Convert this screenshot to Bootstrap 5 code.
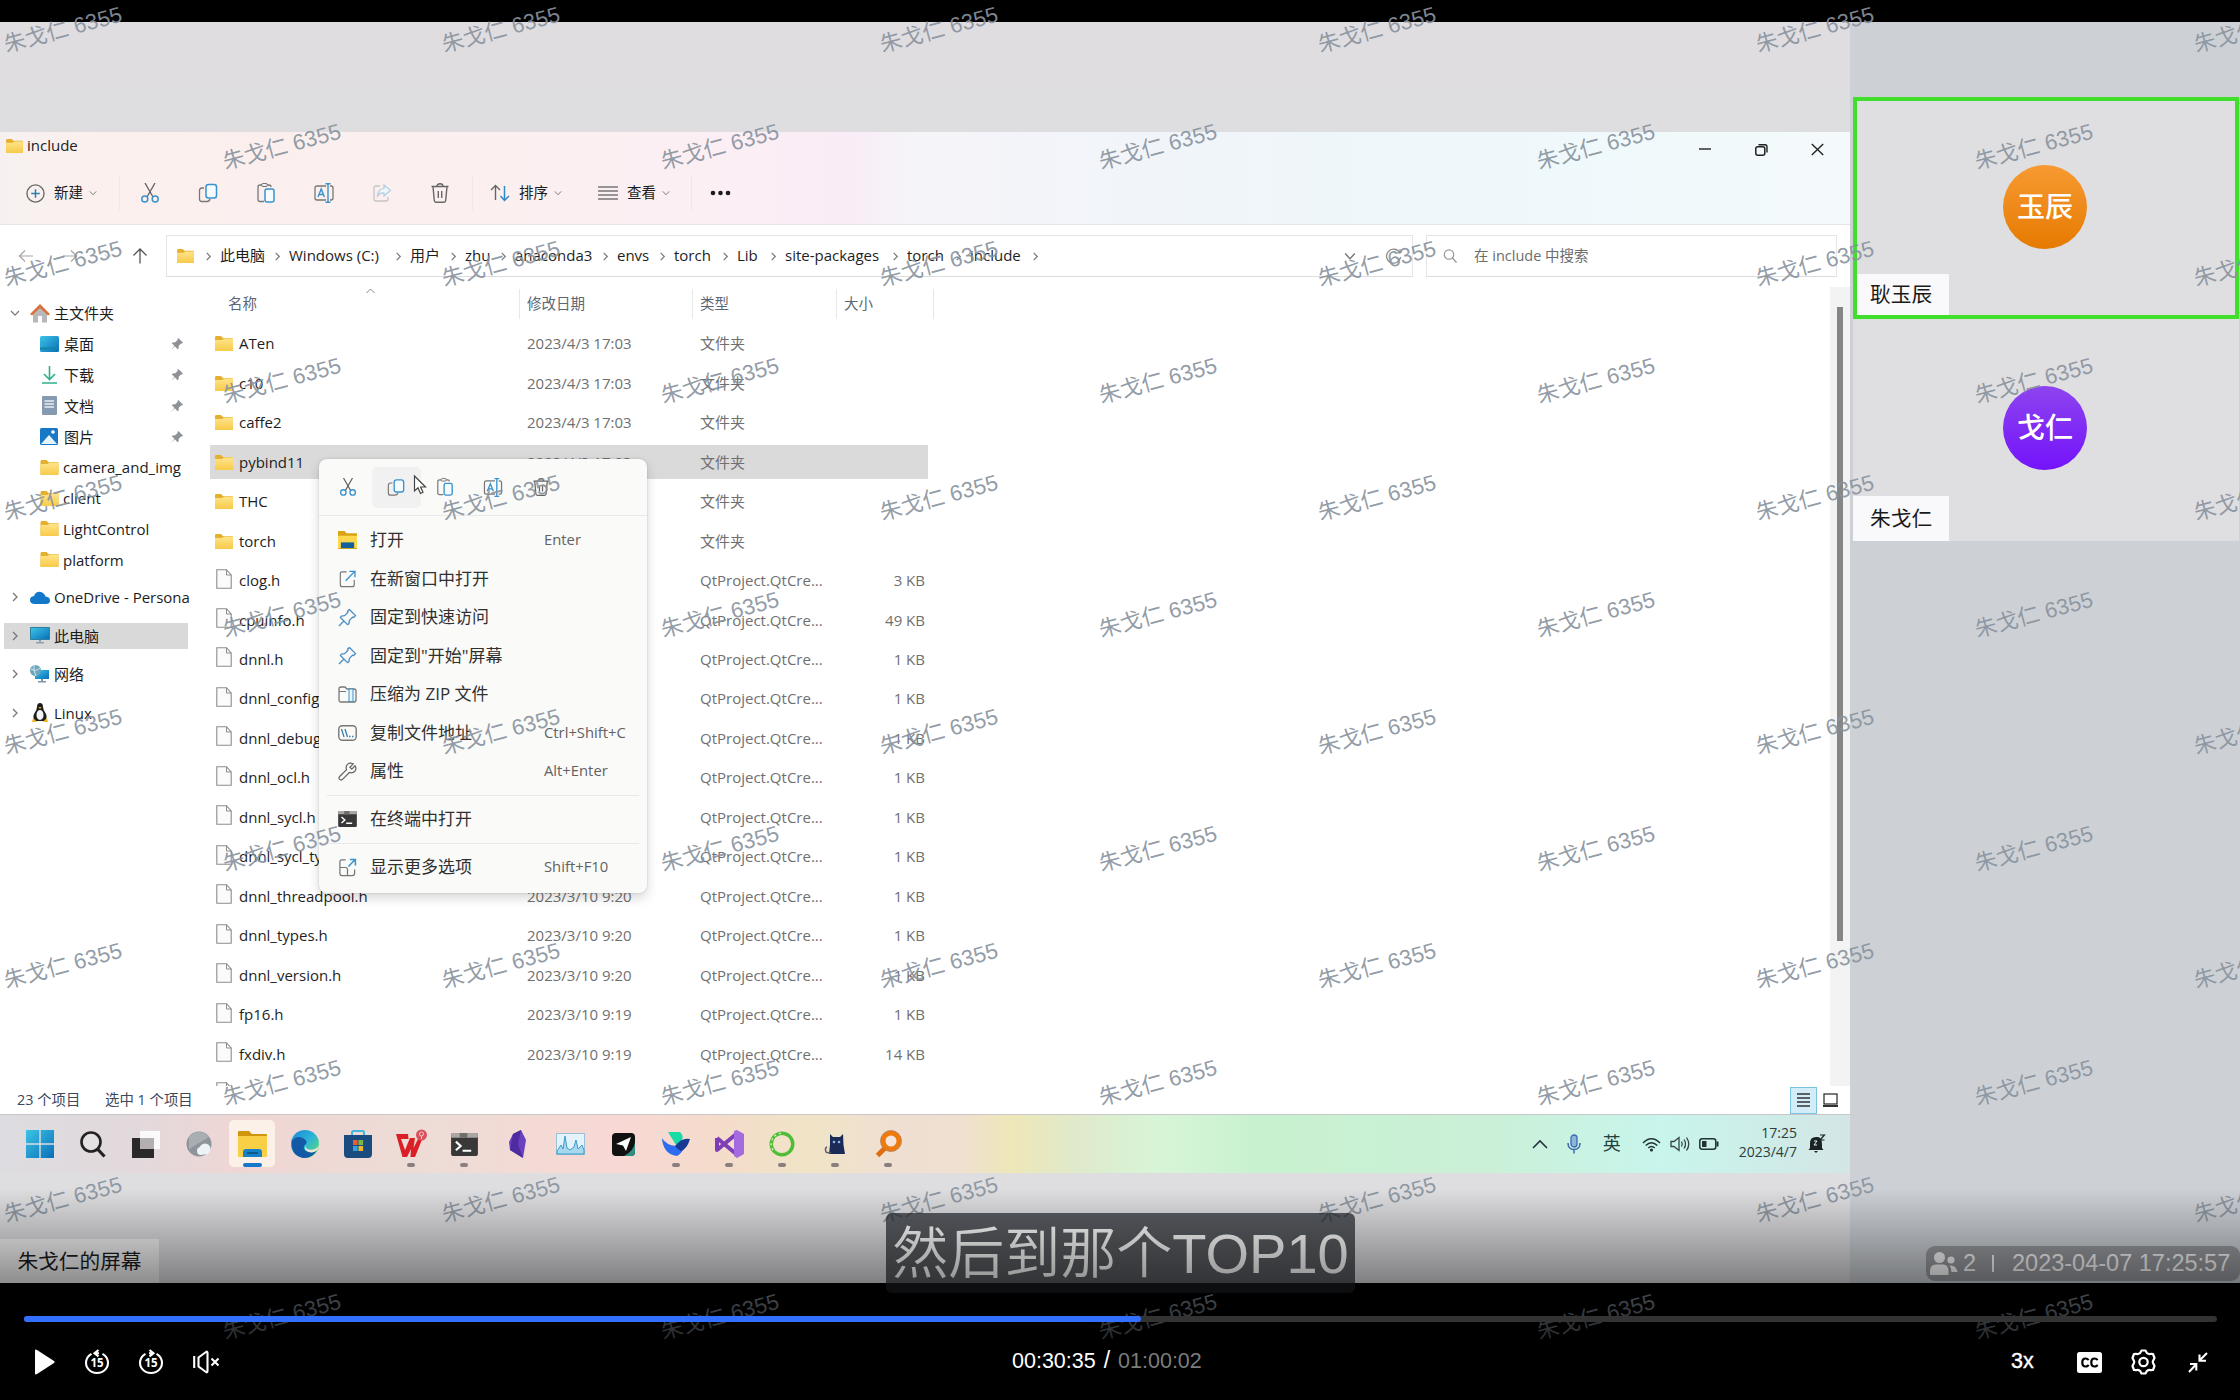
<!DOCTYPE html>
<html lang="zh-CN">
<head>
<meta charset="utf-8">
<meta name="viewport" content="width=device-width, initial-scale=1">
<title>会议录制</title>
<link rel="stylesheet" href="https://cdn.jsdelivr.net/npm/bootstrap@5.3.0/dist/css/bootstrap.min.css">
<style>
body{margin:0;background:#000;font-family:"Open Sans","Noto Sans CJK SC",sans-serif;font-size:15px;line-height:1.2;color:#222}
svg{display:block;flex:none;overflow:visible}
.player{width:2240px;height:1400px;overflow:hidden;background:#000;padding-top:22px}
.video{height:1261px}
.shared{width:1850px;background:linear-gradient(#e0dde1 0,#e0dde1 65px,#dedee1 66px);padding-top:110px}
.explorer{height:982px;background:#fff;overflow:hidden}
.topbar{height:93px;border-bottom:1px solid #e9e2e8;background:linear-gradient(90deg,#f6f1f0 0,#fbf0ee 90px,#fbefef 450px,#fceff4 700px,#faecf6 850px,#f5f4f9 910px,#f0f5fa 1200px,#eef8fb 1500px,#f4fafb 1850px)}
.titlerow{height:36px;padding-left:6px}
.cap{width:56.5px}
.tools{height:50px;font-size:14.5px;color:#1c1c1c}
.tool{width:58px;padding-left:2px}
.vline{width:1px;height:34px;background:#f0e5e8}
.addr{height:62px;padding-top:10px;color:#1e1e1e}
.abox{height:42px;border:1px solid #e6e6e8;border-bottom-color:#dcdcdc}
.chev{width:26px}
.crumbs span,.nw{white-space:nowrap}
.crumbs span{padding-bottom:2px;margin-left:-1px;margin-right:1px}
.side{width:196px;height:799px;padding-top:11px}
.nav-i{height:30.8px;padding-left:40px;color:#1c1c1c}
.nav-i>svg{margin-right:4px}
.nav-i.top{padding-left:9px}
.nav-g{height:38.5px}
.nav-i .pin{margin-left:auto;margin-right:12px}
.sel{background:#d9d9d9;width:184px;height:26px;margin:6.25px 0 6.25px 4px;padding-left:5px!important}
.files{width:1634px;height:799px;overflow:hidden}
.fhead{height:37px;color:#5c6774;font-size:14.5px}
.fhead>div{height:30px;margin-top:2px;border-right:1px solid #e8e8e8;display:flex;align-items:center}
.frow{height:39.48px;color:#707070}
.frow>div{height:33.6px;width:718px;margin-left:14px;padding-left:5px;display:flex;align-items:center}
.frow span{padding-bottom:1px}
.frow.on>div{background:#dadada}
.fn{width:288px;color:#1e1e1e;margin-left:6px}
.ft{width:173px}.fy{width:130px}.fz{width:95px;text-align:right}
.track{width:20px;background:#f3f3f3;padding:20px 0 0 7px}
.thumb{width:6px;height:634px;background:#868686}
.status{height:28px;color:#3d4858;font-size:15px;padding-left:17px}
.vbtn{width:27px;height:27px;background:#d3edf8;border:1px solid #7cc3de}
.ctx{left:319px;top:327px;width:328px;height:434px;background:#fafaf9;border-radius:8px;box-shadow:0 5px 12px rgba(0,0,0,.16),0 0 2px rgba(0,0,0,.18);font-size:17px;color:#303030}
.ctop{height:57px;border-bottom:1px solid #e9e9e9;padding-left:5px}
.ctop>div{width:48.3px;height:41px}
.ctop>.hov{background:#f1f1f1;border-radius:5px}
.cit{height:38.5px;padding-left:19px}
.cit>span:nth-of-type(1){width:174px;margin-left:13px}
.cit .key{font-size:14.8px;color:#626262}
.csep{height:1px;background:#e9e9e9;margin:4px 8px 4.5px}
.cur{left:413px;top:343px}
.taskbar{height:59px;border-top:1px solid #c8c6c8;padding-left:13.5px;background:linear-gradient(90deg,#dddce0 0,#e2d9dc 130px,#efd6d4 240px,#eddcd6 420px,#f8d8d4 620px,#f4dccb 720px,#f0e4c6 810px,#efdfd2 900px,#efe0d0 960px,#eee7b8 1010px,#dfeacb 1080px,#d7f5d7 1160px,#c8f1cf 1260px,#caf0d8 1500px,#c8f5ec 1660px,#d3e6e5 1850px)}
.tb{width:53px;height:58px;position:relative;display:flex;align-items:center;justify-content:center}
.tb.act::before{content:"";position:absolute;left:3px;top:5px;width:46px;height:47px;border-radius:5px;background:rgba(255,250,240,.75)}
.tb svg{position:relative}
.tb.run::after,.tb.act::after{content:"";position:absolute;left:22px;top:48px;width:8px;height:4px;border-radius:2px;background:#8a7f80}
.tb.act::after{left:17px;width:19px;background:#1677cc}
.tray{margin-right:25px;color:#24403c;font-size:14px}
.label-s{width:159px;height:44px;background:#f6f6f8;font-size:20.7px;color:#1c1c1c;margin-top:66px}
.people{width:390px;background:#cdd1d6;padding:75px 1px 0 3px}
.tile{background:#dfdee1;height:222px;position:relative}
.tile.talk{border:4px solid #3fdf2c}
.ava{width:84px;height:84px;border-radius:50%;color:#fff;font-size:28px;font-weight:500;margin-right:2px}
.ava.o{background:linear-gradient(#f79a33,#e67a00)}
.ava.p{background:linear-gradient(#8d44ee,#7413fb)}
.tag{background:#f9f9fb;color:#1a1a1a;font-size:20.7px}
.wm{position:absolute;font:22px "Liberation Sans","Noto Sans CJK SC",sans-serif;line-height:1;color:rgba(137,147,158,.92);white-space:nowrap;transform:translate(-50%,-50%) rotate(-15deg)}
.marks{left:0;top:0;width:2240px;height:1400px;overflow:hidden}
.subt{left:886px;top:1213px;width:469px;height:80px;border-radius:6px;background:rgba(31,35,41,.7);color:#fff;font:56px "Liberation Sans","Noto Sans CJK SC",sans-serif;line-height:71px;white-space:nowrap;text-align:center}
.subt span{font-family:"Noto Sans CJK SC",sans-serif;font-weight:350}
.info{right:0;top:1246px;width:314px;height:35px;border-radius:9px;background:rgba(60,62,65,.36);color:#fff;font:23.5px "Liberation Sans",sans-serif;line-height:35px;padding-left:4px}
.shade{left:0;top:1188px;width:2240px;height:212px;background:linear-gradient(rgba(0,0,0,0),rgba(0,0,0,.95))}
.controls{left:0;top:1316px;width:2240px;padding:0 23px 0 24px;color:#fff;font-family:"Liberation Sans",sans-serif;font-size:21.5px}
.bar{height:6px;border-radius:3px;background:#333}
.bar>div{height:6px;border-radius:3px;background:#3370ff}
.btns{height:80px}
</style>
<script src="https://cdn.jsdelivr.net/npm/bootstrap@5.3.0/dist/js/bootstrap.bundle.min.js"></script>
</head>
<body>
<svg width="0" height="0" class="position-absolute">
<defs>
<linearGradient id="gy" x2="0" y2="1"><stop offset="0" stop-color="#ffe48a"/><stop offset="1" stop-color="#f7ca49"/></linearGradient>
<linearGradient id="gb" x2="1" y2="1"><stop offset="0" stop-color="#3cc4e6"/><stop offset="1" stop-color="#0a6fb8"/></linearGradient>
<linearGradient id="ge" x2="1" y2="1"><stop offset="0" stop-color="#1a86d6"/><stop offset=".5" stop-color="#2bb5d8"/><stop offset="1" stop-color="#6be05a"/></linearGradient>
<symbol id="folder" viewBox="0 0 18 15"><path d="M0 1.5Q0 0 1 0H6L8 2H17Q18 2 18 3V14Q18 15 17 15H1Q0 15 0 14Z" fill="#e5b030"/><path d="M0 4H7L9 2.6H18V14Q18 15 17 15H1Q0 15 0 14Z" fill="url(#gy)"/></symbol>
<symbol id="file" viewBox="0 0 16 20"><path d="M.8.7H10.5L15.2 6V19.3H.8Z" fill="#fbfbfb" stroke="#8d8d8d" stroke-width="1.1"/><path d="M10.5.7V6H15.2" fill="none" stroke="#8d8d8d"/></symbol>
<symbol id="r" viewBox="0 0 10 10"><path d="M3 1L7 5L3 9" fill="none" stroke="#777" stroke-width="1.3"/></symbol>
<symbol id="d" viewBox="0 0 10 10"><path d="M1 3L5 7.2L9 3" fill="none" stroke="#777" stroke-width="1.2"/></symbol>
<symbol id="cut" viewBox="0 0 20 20"><path d="M5 0L13 14M15 0L7 14" stroke="#606060" stroke-width="1.3" fill="none"/><circle cx="4.8" cy="16" r="3" fill="none" stroke="#3a92cc" stroke-width="1.5"/><circle cx="15.2" cy="16" r="3" fill="none" stroke="#3a92cc" stroke-width="1.5"/></symbol>
<symbol id="copy" viewBox="0 0 20 20"><path d="M6 5H4Q1.5 5 1.5 7.500V16Q1.500 18.500 4 18.500H9Q11.500 18.500 12 16" fill="none" stroke="#777" stroke-width="1.3"/><rect x="8" y="1.500" width="10.500" height="13.500" rx="2.500" fill="#f5fbff" stroke="#3a92cc" stroke-width="1.500"/></symbol>
<symbol id="paste" viewBox="0 0 20 20"><path d="M8 18.500H4Q2 18.500 2 16.500V4Q2 2 4 2H13Q15 2 15 4" fill="none" stroke="#777" stroke-width="1.300"/><rect x="5.500" y=".5" width="6" height="3" rx="1.500" fill="#eee" stroke="#777"/><rect x="9" y="6" width="9" height="13" rx="2" fill="#f5fbff" stroke="#3a92cc" stroke-width="1.500"/></symbol>
<symbol id="ren" viewBox="0 0 20 20"><path d="M12 3H3Q1 3 1 5V15Q1 17 3 17H12M16 3H17Q19 3 19 5V15Q19 17 17 17H16" fill="none" stroke="#777" stroke-width="1.300"/><path d="M11.500.7H16.500M14 .7V19.300M11.500 19.300H16.500M4 14L7.200 6L10.400 14M5 11.500H9.400" fill="none" stroke="#3a92cc" stroke-width="1.400"/></symbol>
<symbol id="share" viewBox="0 0 20 20"><path d="M8 3H4Q2 3 2 5V16Q2 18 4 18H14Q16 18 16 16V14" fill="none" stroke="#c5c5c8" stroke-width="1.300"/><path d="M12 2L18.500 7.500L12 13V10Q8 9.500 5.500 13Q6 6 12 5.500Z" fill="#eef6fc" stroke="#b3cde0" stroke-width="1.200"/></symbol>
<symbol id="trash" viewBox="0 0 20 20"><path d="M1.500 3.500H18.500M7 3.500Q7 .8 10 .8Q13 .8 13 3.500M3 3.500L4.300 17.500Q4.500 19.200 6 19.200H14Q15.500 19.200 15.700 17.500L17 3.500M8.300 8V15M11.700 8V15" fill="none" stroke="#666" stroke-width="1.400"/></symbol>
<symbol id="pin" viewBox="0 0 16 16"><path d="M9.500 1L15 6.500L13.600 7.500L12.600 7.300L10 10L9.800 13L8.800 14L5.500 10.500L1 15L5 10L2 7.200L3 6.200L6 6L8.700 3.400L8.500 2.200Z" fill="#8e9196"/></symbol>
<symbol id="pino" viewBox="0 0 20 20"><path d="M12 1.500L18.500 8L16.500 10L15.500 9.500L12 13L11.500 16.500L10 17.500L2.500 10L3.500 8.500L7 8L10.500 4.500L10 3.500ZM6 14L1 19" fill="none" stroke="#4b8fc4" stroke-width="1.400" stroke-linejoin="round"/></symbol>
<symbol id="open" viewBox="0 0 20 20"><path d="M9 2H4Q2 2 2 4V16Q2 18.500 4 18.500H15Q17.500 18.500 17.500 16V11" fill="none" stroke="#777" stroke-width="1.300"/><path d="M8 12L18 1.500M12 1.500H18.300V8" fill="none" stroke="#3a92cc" stroke-width="1.500"/></symbol>
<symbol id="pc" viewBox="0 0 20 17"><rect x="0" y="0" width="20" height="13" rx="1" fill="#2d7fa0"/><rect x="1" y="1" width="18" height="11" fill="url(#gb)"/><path d="M9 13H11V15H14V16.500H6V15H9Z" fill="#8fa1ad"/></symbol>
<symbol id="term" viewBox="0 0 28 24"><rect width="28" height="24" rx="2" fill="#383838"/><rect width="28" height="5" rx="1" fill="#a9a6a3"/><rect x="9" width="8" height="5" fill="#706d6b"/><path d="M5 9L10 13.500L5 18M12 18.500H21" stroke="#fff" stroke-width="2.200" fill="none"/></symbol>
</defs>
</svg>

<div class="player position-relative">
 <div class="video d-flex">
  <main class="shared d-flex flex-column">
   <section class="explorer position-relative">
    <div class="topbar">
     <div class="titlerow d-flex align-items-center">
      <svg width="17" height="14" class="mb-2"><use href="#folder"/></svg><span class="ms-1" style="padding-bottom:10px">include</span>
      <div class="ms-auto d-flex">
       <div class="cap d-flex justify-content-center"><svg width="12" height="14" viewBox="0 0 12 14"><path d="M0 6H12" stroke="#222" stroke-width="1.400"/></svg></div>
       <div class="cap d-flex justify-content-center"><svg width="13" height="14" viewBox="0 0 13 14"><rect x=".8" y="3.800" width="9" height="8.500" rx="2" fill="none" stroke="#222" stroke-width="1.500"/><path d="M3.500 1.800H10Q12 1.800 12 4V9.500" fill="none" stroke="#222" stroke-width="1.400"/></svg></div>
       <div class="cap d-flex justify-content-center"><svg width="13" height="14" viewBox="0 0 13 14"><path d="M.8 1L12.200 12M12.200 1L.8 12" stroke="#222" stroke-width="1.400"/></svg></div>
       <div style="width:4px"></div>
      </div>
     </div>
     <div class="tools d-flex align-items-center">
      <div class="d-flex align-items-center" style="width:119px;padding-left:26px"><svg width="19" height="19" viewBox="0 0 20 20"><circle cx="10" cy="10" r="9" fill="none" stroke="#666" stroke-width="1.400"/><path d="M5.500 10H14.500M10 5.500V14.500" stroke="#2f7fae" stroke-width="1.600"/></svg><span style="margin:0 6px 0 9px">新建</span><svg width="8" height="8"><use href="#d"/></svg></div>
      <div class="vline"></div>
      <div class="tool d-flex justify-content-center"><svg width="20" height="20"><use href="#cut"/></svg></div>
      <div class="tool d-flex justify-content-center"><svg width="20" height="20"><use href="#copy"/></svg></div>
      <div class="tool d-flex justify-content-center"><svg width="20" height="20"><use href="#paste"/></svg></div>
      <div class="tool d-flex justify-content-center"><svg width="20" height="20"><use href="#ren"/></svg></div>
      <div class="tool d-flex justify-content-center"><svg width="20" height="20"><use href="#share"/></svg></div>
      <div class="tool d-flex justify-content-center"><svg width="20" height="20"><use href="#trash"/></svg></div>
      <div class="vline" style="margin-left:4px"></div>
      <div class="d-flex align-items-center" style="width:125px;padding-left:17px"><svg width="20" height="18" viewBox="0 0 20 18"><path d="M5.500 16V1.500M1 6L5.500 1.500L10 6" fill="none" stroke="#666" stroke-width="1.400"/><path d="M14.500 2V16.500M10.500 12L14.500 16.500L19 12" fill="none" stroke="#2f8bc4" stroke-width="1.500"/></svg><span style="margin:0 6px 0 9px">排序</span><svg width="8" height="8"><use href="#d"/></svg></div>
      <div class="d-flex align-items-center" style="width:93px"><svg width="20" height="14" viewBox="0 0 20 14"><path d="M0 1H20M0 5H20M0 9H20M0 13H20" stroke="#777" stroke-width="1.300"/></svg><span style="margin:0 6px 0 9px">查看</span><svg width="8" height="8"><use href="#d"/></svg></div>
      <div class="vline"></div>
      <svg class="ms-3" width="24" height="6" viewBox="0 0 24 6"><g fill="#1c1c1c"><circle cx="5" cy="3" r="2.300"/><circle cx="12.500" cy="3" r="2.300"/><circle cx="20" cy="3" r="2.300"/></g></svg>
     </div>
    </div>
    <div class="addr d-flex">
     <div class="d-flex align-items-center" style="width:166px;height:42px;padding-left:18px">
      <svg width="16" height="14" viewBox="0 0 16 14"><path d="M15 7H1.500M7 1.500L1.500 7L7 12.500" fill="none" stroke="#a5a5a5" stroke-width="1.200"/></svg>
      <svg width="16" height="14" viewBox="0 0 16 14" style="margin-left:28px"><path d="M1 7H14.500M9 1.500L14.500 7L9 12.500" fill="none" stroke="#a5a5a5" stroke-width="1.200"/></svg>
      <svg width="8" height="8" style="margin-left:26px"><use href="#d" opacity=".5"/></svg>
      <svg width="16" height="16" viewBox="0 0 16 16" style="margin-left:20px"><path d="M8 15.500V1M1.500 7.500L8 1L14.500 7.500" fill="none" stroke="#555" stroke-width="1.300"/></svg>
     </div>
     <div class="abox d-flex align-items-center" style="width:1247px;padding-left:9px">
      <svg width="19" height="14"><use href="#folder"/></svg>
      <div class="crumbs d-flex align-items-center" id="crumbs"></div>
      <svg class="ms-auto" width="12" height="12"><use href="#d"/></svg>
      <svg width="17" height="17" viewBox="0 0 17 17" style="margin:0 10px 0 29px"><path d="M14.500 4.500A7 7 0 1 0 15.500 9M15 1V5H11" fill="none" stroke="#888" stroke-width="1.200"/></svg>
     </div>
     <div class="abox d-flex align-items-center" style="width:411px;margin-left:13px;padding-left:16px;color:#6d6d6d;font-size:14.500px">
      <svg width="14" height="14" viewBox="0 0 14 14"><circle cx="6" cy="5.500" r="4.700" fill="none" stroke="#999" stroke-width="1.200"/><path d="M9.500 9L13.500 13.500" stroke="#999" stroke-width="1.300"/></svg><span style="margin-left:17px">在 include 中搜索</span>
     </div>
    </div>
    <div class="d-flex">
     <nav class="side" id="side"></nav>
     <div class="files position-relative">
      <div class="fhead d-flex">
       <div style="width:324px;padding-left:32px">名称</div><div style="width:173px;padding-left:7px">修改日期</div><div style="width:144px;padding-left:7px">类型</div><div style="width:97px;padding-left:7px">大小</div>
      </div>
      <svg class="position-absolute" width="9" height="6" viewBox="0 0 9 6" style="left:170px;top:1px"><path d="M.5 5L4.500 1L8.500 5" fill="none" stroke="#888"/></svg>
      <div id="rows"></div>
     </div>
     <div class="track"><div class="thumb"></div></div>
    </div>
    <div class="status d-flex align-items-center">
     <span class="nw" style="width:88px;font-size:14.400px">23 个项目</span><span class="nw" style="font-size:14.400px">选中 1 个项目</span>
     <div class="vbtn d-flex align-items-center justify-content-center ms-auto"><svg width="13" height="14" viewBox="0 0 13 14"><path d="M0 1H13M0 5H13M0 9H13M0 13H13" stroke="#333" stroke-width="1.300"/></svg></div>
     <svg width="15" height="14" viewBox="0 0 15 14" style="margin:0 12px 0 6px"><rect x="1" y="1" width="13" height="10" fill="#fff" stroke="#333" stroke-width="1.300"/><path d="M0 13H15" stroke="#333" stroke-width="2"/></svg>
    </div>
    <div class="ctx position-absolute">
     <div class="ctop d-flex align-items-center">
      <div class="d-flex align-items-center justify-content-center"><svg width="18" height="20"><use href="#cut"/></svg></div>
      <div class="hov d-flex align-items-center justify-content-center"><svg width="18" height="19"><use href="#copy"/></svg></div>
      <div class="d-flex align-items-center justify-content-center"><svg width="18" height="20"><use href="#paste"/></svg></div>
      <div class="d-flex align-items-center justify-content-center"><svg width="20" height="19"><use href="#ren"/></svg></div>
      <div class="d-flex align-items-center justify-content-center"><svg width="18" height="20"><use href="#trash"/></svg></div>
     </div>
     <div style="padding-top:5px">
      <div class="cit d-flex align-items-center"><svg width="19" height="18" viewBox="0 0 20 19"><path d="M0 0H7L9 2.500H20V19H0Z" fill="#d9a414"/><path d="M0 5H20V18H0Z" fill="#ffd84f"/><path d="M3 12H17V18H3Z" fill="#12619c"/></svg><span>打开</span><span class="key">Enter</span></div>
      <div class="cit d-flex align-items-center"><svg width="19" height="18"><use href="#open"/></svg><span>在新窗口中打开</span></div>
      <div class="cit d-flex align-items-center"><svg width="19" height="19"><use href="#pino"/></svg><span>固定到快速访问</span></div>
      <div class="cit d-flex align-items-center"><svg width="19" height="19"><use href="#pino"/></svg><span>固定到"开始"屏幕</span></div>
      <div class="cit d-flex align-items-center"><svg width="19" height="17" viewBox="0 0 19 17"><path d="M1 3Q1 1 3 1H7L9 3H16Q18 3 18 5V14Q18 16 16 16H3Q1 16 1 14Z" fill="none" stroke="#777" stroke-width="1.300"/><rect x="11" y="3" width="4" height="12.500" fill="#eaf6ff" stroke="#3a92cc"/><path d="M1 5.500H8" stroke="#777"/></svg><span>压缩为 ZIP 文件</span></div>
      <div class="cit d-flex align-items-center"><svg width="19" height="16" viewBox="0 0 19 16"><rect x=".8" y=".8" width="17.400" height="14.400" rx="3.500" fill="none" stroke="#777" stroke-width="1.400"/><path d="M3.500 4L6 12M7 4L9.500 12M11 11.500H12.500M14 11.500H15.500" stroke="#3a7fae" stroke-width="1.300"/></svg><span>复制文件地址</span><span class="key">Ctrl+Shift+C</span></div>
      <div class="cit d-flex align-items-center"><svg width="19" height="19" viewBox="0 0 20 20"><path d="M18 4L14.500 7.500L12.500 5.500L16 2Q12 0 9.500 3Q8 5 9 8L1.500 15.500Q.5 17 1.800 18.300Q3 19.500 4.500 18.500L12 11Q15.500 12 17.500 10Q20 7.500 18 4Z" fill="none" stroke="#666" stroke-width="1.300"/></svg><span>属性</span><span class="key">Alt+Enter</span></div>
      <div class="csep"></div>
      <div class="cit d-flex align-items-center"><svg width="19" height="16"><use href="#term"/></svg><span>在终端中打开</span></div>
      <div class="csep"></div>
      <div class="cit d-flex align-items-center"><svg width="19" height="19" viewBox="0 0 20 20"><path d="M8 2H4Q2 2 2 4V16Q2 18.500 4 18.500H15Q17.500 18.500 17.500 16V12M2 10H8Q10 10 10 12V18" fill="none" stroke="#777" stroke-width="1.300"/><path d="M11 9L18 1.500M12.500 1.500H18.300V8" fill="none" stroke="#3a92cc" stroke-width="1.600"/></svg><span>显示更多选项</span><span class="key">Shift+F10</span></div>
     </div>
    </div>
    <svg class="cur position-absolute" width="14" height="20" viewBox="0 0 14 20"><path d="M1.500 1V16L5 12.800L7.500 18.500L10 17.300L7.600 12H12.500Z" fill="#fff" stroke="#444" stroke-width="1.200"/></svg>
   </section>

   <div class="taskbar d-flex align-items-center">
    <div class="tb"><svg width="28" height="28" viewBox="0 0 28 28"><path d="M0 0H13.300V13.300H0ZM14.700 0H28V13.300H14.700ZM0 14.700H13.300V28H0ZM14.700 14.700H28V28H14.700Z" fill="url(#gb)"/></svg></div>
    <div class="tb"><svg width="26" height="27" viewBox="0 0 26 27"><circle cx="11" cy="11" r="9.500" fill="#e8e8ea" fill-opacity=".5" stroke="#222" stroke-width="2.600"/><path d="M17.500 18L24.500 25.500" stroke="#222" stroke-width="3.200"/></svg></div>
    <div class="tb"><svg width="28" height="27" viewBox="0 0 28 27"><rect y="7" width="22" height="20" fill="#2a2828"/><rect x="8" width="20" height="18" fill="#fff" fill-opacity=".85"/><rect x="8" y="7" width="14" height="11" fill="#b5b0b0"/></svg></div>
    <div class="tb"><svg width="26" height="26" viewBox="0 0 26 26"><circle cx="13" cy="13" r="12.500" fill="#8e9499"/><path d="M3 6A12.500 12.500 0 0 1 23 6L3 18Z" fill="#a8aeb2"/><circle cx="19" cy="18" r="5.500" fill="#eef4f6"/><circle cx="15" cy="20" r="4" fill="#eef4f6"/></svg></div>
    <div class="tb act"><svg width="29" height="26" viewBox="0 0 29 26"><path d="M0 1Q0 0 1 0H11L14 3H28Q29 3 29 4V25H0Z" fill="#cf960d"/><path d="M0 5H29V25Q29 26 28 26H0Z" fill="#f9cf45"/><path d="M5 26V21Q5 18 8 18H21Q24 18 24 21V26Z" fill="#1883c4"/><path d="M9 22H20" stroke="#0e5a90" stroke-width="2"/></svg></div>
    <div class="tb"><svg width="28" height="28" viewBox="0 0 28 28"><circle cx="14" cy="14" r="14" fill="url(#ge)"/><path d="M1 11Q5 5 12 8Q17 11 15 14Q11 17 14 20.500Q19 24 25.500 21Q20 29 12 27.900Q-1 25 1 11Z" fill="#1459a5"/><path d="M14.500 15Q14 19.500 20 19.800Q26 19.500 28 15Q27 22 21 22.500Q12 22 14.500 15Z" fill="#efe6dc"/></svg></div>
    <div class="tb"><svg width="28" height="28" viewBox="0 0 28 28"><path d="M8 5V2.500Q8 1 9.500 1H18.500Q20 1 20 2.500V5" fill="none" stroke="#3fb8dc" stroke-width="2"/><path d="M0 5H28V24Q28 28 24 28H4Q0 28 0 24Z" fill="#1a4c80"/><rect x="9" y="10" width="4.600" height="5" fill="#ee5c35"/><rect x="14.500" y="10" width="4.600" height="5" fill="#7db93f"/><rect x="9" y="16" width="4.600" height="5" fill="#2fa3df"/><rect x="14.500" y="16" width="4.600" height="5" fill="#f2b631"/></svg></div>
    <div class="tb run"><svg width="30" height="28" viewBox="0 0 30 28"><path d="M0 4H12L12.500 9H5L9 20L14 8H19L17.500 18L23 7H27L19 27H14.500L15 19L11 27H6.500Z" fill="#dc1f26"/><circle cx="25.500" cy="5" r="5.500" fill="#d9525e"/><circle cx="25.500" cy="4" r="2" fill="none" stroke="#f6c9c9"/><path d="M25.500 6V9" stroke="#f6c9c9"/></svg></div>
    <div class="tb run"><svg width="29" height="23"><use href="#term"/></svg></div>
    <div class="tb"><svg width="17" height="28" viewBox="0 0 17 28"><path d="M12 0L17 10L14 28L1 20L0 12L4 4Z" fill="#6a3fc0"/><path d="M12 0L9 14L14 28L1 20L4 4Z" fill="#4f2ba0"/></svg></div>
    <div class="tb"><svg width="29" height="22" viewBox="0 0 29 22"><rect x=".5" y=".5" width="28" height="21" fill="#e4f2fa" stroke="#9cc0d6"/><path d="M1 18L5 12L7 16L9 3L11 15L14 17L18 14L20 7L22 16L26 12L28 17V21H1Z" fill="#a8d8ee" stroke="#3a9cc8"/></svg></div>
    <div class="tb"><svg width="23" height="23" viewBox="0 0 23 23"><rect width="23" height="23" rx="4" fill="#111"/><path d="M12 23Q22 18 23 9V19Q23 23 19 23Z" fill="#2f8f80"/><path d="M19 4L14 18L11 12.500L4 11Z" fill="#fff"/></svg></div>
    <div class="tb run"><svg width="28" height="24" viewBox="0 0 28 24"><path d="M6 0H18Q22 4 20 8L14 13Z" fill="#18dba8"/><path d="M0 6Q4 13 14 14Q18 12 22 13Q22 20 15 24Q1 22 0 6Z" fill="#2d6bf0"/><path d="M13 14Q20 5 28 7Q25 17 19 19Q16 18 13 14Z" fill="#163a94"/></svg></div>
    <div class="tb run"><svg width="29" height="28" viewBox="0 0 29 28"><path d="M2 8V20L20 5M2 8L20 23" fill="none" stroke="#7d3fb8" stroke-width="4" stroke-linejoin="round"/><path d="M19 1L22 0L29 4V24L22 28L19 26Z" fill="#a56ae0"/></svg></div>
    <div class="tb run"><svg width="26" height="26" viewBox="0 0 26 26"><circle cx="13" cy="13" r="10.800" fill="none" stroke="#4fbd35" stroke-width="3.400"/><path d="M4 19A10.800 10.800 0 0 1 14 2.200" fill="none" stroke="#d5eec6" stroke-width="1.400" stroke-dasharray="2 3"/></svg></div>
    <div class="tb run"><svg width="20" height="20" viewBox="0 0 20 20"><path d="M5 0L8 3H15L18 0L18.500 11L20 20H4L5 11Z" fill="#1b2b58"/><path d="M2 13Q-.5 14 1 18Q2 19 6 18.500" fill="none" stroke="#5a5f70" stroke-width="1.500"/><circle cx="9" cy="8" r="1.300" fill="#8db6ea"/><circle cx="14" cy="8" r="1.300" fill="#8db6ea"/></svg></div>
    <div class="tb run"><svg width="27" height="28" viewBox="0 0 27 28"><path d="M11 17L2.500 25.500" stroke="#e06c10" stroke-width="5"/><circle cx="16" cy="11" r="8" fill="#f6e5da" stroke="#ee7a0c" stroke-width="5"/><circle cx="16" cy="11" r="10.500" fill="none" stroke="#b08060" stroke-width=".8"/></svg></div>
    <div class="tray d-flex align-items-center ms-auto">
     <svg width="16" height="10" viewBox="0 0 16 10"><path d="M1 9L8 2L15 9" fill="none" stroke="#234" stroke-width="1.600"/></svg>
     <svg width="14" height="20" viewBox="0 0 14 20" style="margin-left:19px"><rect x="4" y="1" width="6" height="12" rx="3" fill="#8fb4e0" stroke="#3b6cae" stroke-width="1.300"/><path d="M1 9Q1 15.500 7 15.500Q13 15.500 13 9M7 15.500V19.500" fill="none" stroke="#3b6cae" stroke-width="1.500"/></svg>
     <span style="margin:0 21px 0 22px;font-size:18px">英</span>
     <svg width="19" height="15" viewBox="0 0 19 15"><path d="M1 6Q9.500-2.500 18 6M3.700 8.500Q9.500 3 15.300 8.500M6.300 11Q9.500 8 12.700 11" fill="none" stroke="#233" stroke-width="1.500"/><circle cx="9.500" cy="13" r="1.600" fill="#233"/></svg>
     <svg width="20" height="16" viewBox="0 0 20 16" style="margin-left:9px"><path d="M1 5.500H4L9 1.500V14.500L4 10.500H1ZM11.500 5.500Q13 8 11.500 10.500M14 3.500Q17 8 14 12.500M16.500 1.500Q21 8 16.500 14.500" fill="none" stroke="#344" stroke-width="1.300"/></svg>
     <svg width="20" height="12" viewBox="0 0 20 12" style="margin:0 20px 0 9px"><rect x=".8" y=".8" width="16" height="10.400" rx="2.500" fill="none" stroke="#233" stroke-width="1.500"/><rect x="3" y="3" width="4.500" height="6" fill="#233"/><path d="M18.500 3.500V8.500" stroke="#233" stroke-width="2"/></svg>
     <div class="text-end pb-1" style="font-size:14px;line-height:19px;color:#2c3d3b">17:25<br>2023/4/7</div>
     <svg width="17" height="18" viewBox="0 0 17 18" style="margin-left:11px"><path d="M2 13V8Q2 2 8 2H10Q14 3 14 9V13L15.500 15H.5Z" fill="#1c2222"/><path d="M6 16H10L8 18Z" fill="#1c2222"/><path d="M6 6H9L6 10H9" stroke="#cfe" fill="none"/><path d="M12 0H16.500L12 5H16.500" stroke="#1c2222" stroke-width="1.200" fill="none"/></svg>
    </div>
   </div>
   <div class="label-s d-flex align-items-center justify-content-center">朱戈仁的屏幕</div>
  </main>
  <aside class="people">
   <div class="tile talk d-flex flex-column align-items-center" style="padding-top:64px"><div class="ava o d-flex align-items-center justify-content-center">玉辰</div><div class="tag align-self-start mt-auto d-flex align-items-center" style="width:92px;height:41px;padding-left:13px">耿玉辰</div></div>
   <div class="tile d-flex flex-column align-items-center" style="padding-top:67px"><div class="ava p d-flex align-items-center justify-content-center">戈仁</div><div class="tag align-self-start mt-auto d-flex align-items-center" style="width:96px;height:45px;padding-left:17px">朱戈仁</div></div>
  </aside>
 </div>
 <div class="info position-absolute d-flex align-items-center"><svg width="28" height="23" viewBox="0 0 28 23"><g fill="#fff"><circle cx="9.500" cy="5.500" r="5.500"/><path d="M0 23V19Q0 12.500 6 12.500H13Q18.500 12.500 18.500 19V23Z"/><circle cx="21" cy="8" r="3.600"/><path d="M19.500 13.500Q26.500 13 27.500 20H21.500Q21.500 16 19.500 13.500Z"/></g></svg><span style="margin-left:5px;width:29px">2</span><span style="width:2px;height:17px;background:#fff"></span><span class="nw" style="margin-left:18px">2023-04-07 17:25:57</span></div>
 <div class="marks position-absolute" id="marks"></div>
 <div class="subt position-absolute"><span>然后到那个</span>TOP10</div>
 <div class="shade position-absolute"></div>
 <div class="controls position-absolute">
  <div class="bar"><div style="width:1117px"></div></div>
  <div class="btns d-flex align-items-center">
   <svg width="21" height="26" viewBox="0 0 21 26" style="margin-left:10px"><path d="M1 1.500Q1 0 3 1L20 12Q21.500 13 20 14L3 25Q1 26 1 24.500Z" fill="#fff"/></svg>
   <svg width="26" height="26" viewBox="0 0 26 26" style="margin-left:29px"><path d="M7.500 4.800A11 10.300 0 1 0 18.500 4.800M14.500 1L10.500 4.200L14.500 7.400M11 4.200H15" fill="none" stroke="#fff" stroke-width="2.100"/><text x="13" y="18.300" text-anchor="middle" font-size="11.500" font-weight="700" fill="#fff" font-family="Open Sans">15</text></svg>
   <svg width="26" height="26" viewBox="0 0 26 26" style="margin-left:28px"><path d="M18.500 4.800A11 10.300 0 1 1 7.500 4.800M11.500 1L15.500 4.200L11.500 7.400M15 4.200H11" fill="none" stroke="#fff" stroke-width="2.100"/><text x="13" y="18.300" text-anchor="middle" font-size="11.500" font-weight="700" fill="#fff" font-family="Open Sans">15</text></svg>
   <svg width="27" height="24" viewBox="0 0 27 24" style="margin-left:29px"><path d="M1.200 6V18M5.500 7.500L13 2Q14.500 1 14.500 3V21Q14.500 23 13 22L5.500 16.500ZM18.500 8.500L25.500 15.500M25.500 8.500L18.500 15.500" fill="none" stroke="#fff" stroke-width="2.100"/></svg>
   <div class="nw" style="margin-left:792px;width:200px">00:30:35<span style="margin:0 8px;font-size:23px;line-height:1">/</span><span style="color:#7c7c7c">01:00:02</span></div>
   <div class="ms-auto d-flex align-items-center">
    <span style="width:66px;font-size:21.500px;-webkit-text-stroke:.4px #fff">3x</span>
    <svg width="25" height="21" viewBox="0 0 25 21"><rect width="25" height="21" rx="2.500" fill="#fff"/><path d="M11.300 8.300Q10.800 6.500 8.500 6.500Q5.300 6.500 5.300 10.500Q5.300 14.500 8.500 14.500Q10.800 14.500 11.300 12.700M20.300 8.300Q19.800 6.500 17.500 6.500Q14.300 6.500 14.300 10.500Q14.300 14.500 17.500 14.500Q19.800 14.500 20.300 12.700" fill="none" stroke="#000" stroke-width="2.200"/></svg>
    <svg width="25" height="26" viewBox="0 0 25 26" style="margin-left:29px"><path d="M10.500 1.500H14.500L16 4.200Q18 5.500 20 4.800L22 5L23.500 9L22 12Q21.500 13 22 14L23.500 17L22 21L20 21.200Q18 20.500 16 21.800L14.500 24.500H10.500L9 21.800Q7 20.500 5 21.200L3 21L1.500 17L3 14Q3.500 13 3 12L1.500 9L3 5L5 4.800Q7 5.500 9 4.200Z" fill="none" stroke="#fff" stroke-width="2.200" stroke-linejoin="round"/><circle cx="12.500" cy="13" r="4.200" fill="none" stroke="#fff" stroke-width="2.200"/></svg>
    <svg width="20" height="21" viewBox="0 0 20 21" style="margin:0 9px 0 32px"><path d="M19 1L12 8M11.500 2.500V8.800H18M1 20L8 12.500M2 12H8.300V18.500" fill="none" stroke="#fff" stroke-width="2.100"/></svg>
   </div>
  </div>
 </div>
</div>

<script>
const ic=(id,w,h,c='')=>`<svg class="${c}" width="${w}" height="${h}"><use href="#${id}"/></svg>`;
const chev=`<i class="chev d-flex justify-content-center">${ic('r',9,9)}</i>`;
document.getElementById('crumbs').innerHTML=[['此电脑',43],['Windows (C:)',95],['用户',29],['zhu',24],['anaconda3',76],['envs',31],['torch',37],['Lib',22],['site-packages',96],['torch',37],['include',51]]
 .map(([t,w])=>`${chev}<span style="width:${w}px">${t}</span>`).join('')+chev;

const rows=[['ATen',1,'2023/4/3 17:03'],['c10',1,'2023/4/3 17:03'],['caffe2',1,'2023/4/3 17:03'],['pybind11',2,'2023/4/3 17:03'],['THC',1,''],['torch',1,''],
['clog.h',0,'','3 KB'],['cpuinfo.h',0,'','49 KB'],['dnnl.h',0,'','1 KB'],['dnnl_config',0,'','1 KB'],['dnnl_debug',0,'','1 KB'],['dnnl_ocl.h',0,'','1 KB'],['dnnl_sycl.h',0,'','1 KB'],['dnnl_sycl_ty',0,'','1 KB'],['dnnl_threadpool.h',0,'2023/3/10 9:20','1 KB'],['dnnl_types.h',0,'2023/3/10 9:20','1 KB'],['dnnl_version.h',0,'2023/3/10 9:20','1 KB'],['fp16.h',0,'2023/3/10 9:19','1 KB'],['fxdiv.h',0,'2023/3/10 9:19','14 KB'],['',0,'']];
document.getElementById('rows').innerHTML=rows.map(([n,k,t,z])=>`<div class="frow d-flex align-items-center ${k==2?'on':''}"><div>${k?ic('folder',18,15):ic('file',18,20,'mb-1')}<span class="fn nw">${n}</span><span class="ft nw">${t}</span><span class="fy nw">${n?(k?'文件夹':'QtProject.QtCre...'):''}</span><span class="fz nw">${z||''}</span></div></div>`).join('');

const S=(w,h,b)=>`<svg width="${w}" height="${h}" viewBox="0 0 ${w} ${h}">${b}</svg>`;
const home=S(20,19,'<path d="M3 8V18.500H8V12H12V18.500H17V8L10 2Z" fill="#b8b8ba"/><path d="M0 10L10 0L20 10L18 11.500L10 4L2 11.500Z" fill="#d8703a"/>');
const desk=S(20,16,'<rect width="19" height="16" rx="1.500" fill="url(#gb)"/><path d="M0 12.500H19" stroke="#1582a8" stroke-width="2"/>');
const down=S(20,18,'<path d="M9.500 0V13M4 8L9.500 13.500L15 8M2 17H17" fill="none" stroke="#2fb08a" stroke-width="1.600"/>');
const doc=S(20,19,'<rect x="2" width="15" height="19" rx="1" fill="#8599b0"/><path d="M4.500 5H14M4.500 8H14M4.500 11H14" stroke="#e9eef4" stroke-width="1.400"/>');
const pic=S(20,17,'<rect width="18" height="17" rx="1.500" fill="#1878c8"/><path d="M1 16L9 7L17 16Z" fill="#e6f5fd"/><circle cx="13" cy="4" r="1.800" fill="#fff"/>');
const cloud=S(20,13,'<path d="M4 13Q0 12.500 0 9Q0 5.500 4 5Q6 0 11 1Q14.500 2 15.500 5.500Q20 6 20 9.500Q20 13 16 13Z" fill="#1478ca"/>');
const net=S(20,18,'<rect x="5" y="5" width="14" height="9" fill="url(#gb)"/><path d="M11 14H13V16H16V17.500H8V16H11Z" fill="#7d95a5"/><circle cx="5.500" cy="5.500" r="5.500" fill="#6ea7bd"/><path d="M1 4Q6 7 10 3M4 0Q3 5 6 11" stroke="#d0e8f0" fill="none"/>');
const tux=S(20,19,'<path d="M7 4Q7 0 10 0Q13 0 13 4Q13 7 16 11Q18 16 14 18H6Q2 16 4 11Q7 7 7 4Z" fill="#1d1d1d"/><ellipse cx="10" cy="12" rx="3.500" ry="5" fill="#f5f5f5"/><path d="M3 15L7 19H2ZM17 15L13 19H18ZM8.500 4H11.500L10 6Z" fill="#f0b822"/>');
const q=(i,t,p)=>`<div class="nav-i d-flex align-items-center">${i}<span class="nw">${t}</span>${p?ic('pin',14,14,'pin'):''}</div>`;
const g=(i,t,c='',a='r')=>`<div class="nav-i top d-flex align-items-center ${c}">${ic(a,12,10)}<span style="width:5px"></span>${i}<span class="nw overflow-hidden">${t}</span></div>`;
const f=`<svg width="19" height="15"><use href="#folder"/></svg>`;
document.getElementById('side').innerHTML=g(home,'主文件夹','','d')+q(desk,'桌面',1)+q(down,'下载',1)+q(doc,'文档',1)+q(pic,'图片',1)+q(f,'camera_and_img')+q(f,'client')+q(f,'LightControl')+q(f,'platform')
 +'<div style="height:3px"></div>'+g(cloud,'OneDrive - Persona','nav-g')+g(`<svg width="20" height="17"><use href="#pc"/></svg>`,'此电脑','sel')+g(net,'网络','nav-g')+g(tux,'Linux','nav-g');

let m='';
for(let k=0;k<12;k++)for(let j=0;j<6;j++){
 const x=62.5+(k%2?219:0)+438*j;
 if(x<2300)m+=`<span class="wm" style="left:${x}px;top:${30+117*k}px">朱戈仁 6355</span>`;
}
document.getElementById('marks').innerHTML=m;
</script>
</body>
</html>
